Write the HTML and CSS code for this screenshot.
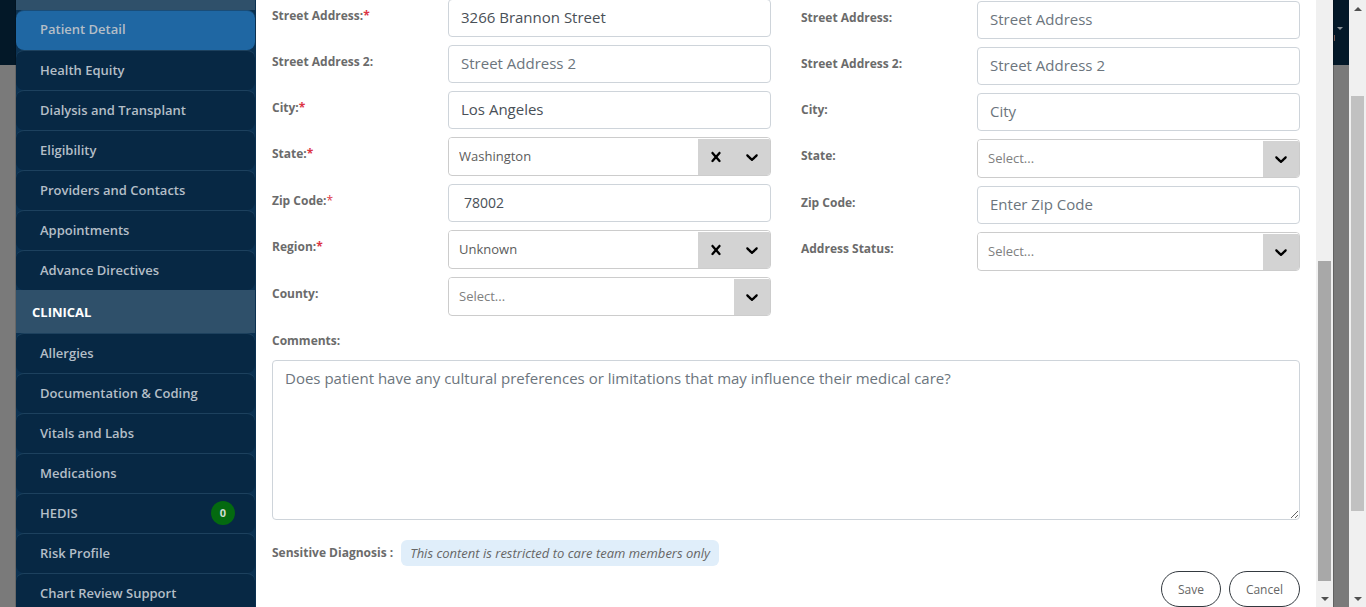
FILE: index.html
```html
<!DOCTYPE html>
<html lang="en">
<head>
<meta charset="utf-8">
<meta name="viewport" content="width=device-width, initial-scale=1">
<title>Patient Detail</title>
<link rel="stylesheet" href="styles.css">
</head>
<body>
<svg class="sprite" aria-hidden="true">
  <symbol id="chevron" viewBox="0 0 20 20"><path d="M4.516 7.548c0.436-0.446 1.043-0.481 1.576 0l3.908 3.747 3.908-3.747c0.533-0.481 1.141-0.446 1.574 0 0.436 0.445 0.408 1.197 0 1.615-0.406 0.418-4.695 4.502-4.695 4.502-0.217 0.223-0.502 0.335-0.787 0.335s-0.57-0.112-0.789-0.335c0 0-4.287-4.084-4.695-4.502s-0.436-1.17 0-1.615z"/></symbol>
  <symbol id="cross" viewBox="0 0 20 20"><path d="M14.348 14.849c-0.469 0.469-1.229 0.469-1.697 0l-2.651-3.030-2.651 3.029c-0.469 0.469-1.229 0.469-1.697 0-0.469-0.469-0.469-1.229 0-1.697l2.758-3.15-2.759-3.152c-0.469-0.469-0.469-1.228 0-1.697s1.228-0.469 1.697 0l2.652 3.031 2.651-3.031c0.469-0.469 1.228-0.469 1.697 0s0.469 1.229 0 1.697l-2.758 3.152 2.758 3.15c0.469 0.469 0.469 1.229 0 1.698z"/></symbol>
</svg>
<div class="page">
  <div class="backdrop backdrop-left"></div>
  <div class="modal">
    <nav class="sidebar">
      <div class="section section-cut"></div>
      <a class="item active" href="#">Patient Detail</a>
      <a class="item" href="#">Health Equity</a>
      <a class="item" href="#">Dialysis and Transplant</a>
      <a class="item" href="#">Eligibility</a>
      <a class="item" href="#">Providers and Contacts</a>
      <a class="item" href="#">Appointments</a>
      <a class="item" href="#">Advance Directives</a>
      <div class="section">CLINICAL</div>
      <a class="item" href="#">Allergies</a>
      <a class="item" href="#">Documentation &amp; Coding</a>
      <a class="item" href="#">Vitals and Labs</a>
      <a class="item" href="#">Medications</a>
      <a class="item" href="#">HEDIS <span class="count">0</span></a>
      <a class="item" href="#">Risk Profile</a>
      <a class="item" href="#">Chart Review Support</a>
    </nav>
    <form class="form">
      <div class="columns">
        <div class="column">
          <div class="field"><label for="street">Street Address:<span class="req">*</span></label><input class="input" id="street" type="text" value="3266 Brannon Street"></div>
          <div class="field"><label for="street2">Street Address 2:</label><input class="input" id="street2" type="text" placeholder="Street Address 2"></div>
          <div class="field"><label for="city">City:<span class="req">*</span></label><input class="input" id="city" type="text" value="Los Angeles"></div>
          <div class="field"><label for="state">State:<span class="req">*</span></label>
            <div class="picker"><select id="state"><option>Washington</option></select><div class="tools"><button class="tool clear" type="button" aria-label="Clear state"><svg class="icon"><use href="#cross"/></svg></button><span class="tool"><svg class="icon"><use href="#chevron"/></svg></span></div></div></div>
          <div class="field"><label for="zip">Zip Code:<span class="req light">*</span></label><input class="input zip" id="zip" type="text" value="78002"></div>
          <div class="field"><label for="region">Region:<span class="req">*</span></label>
            <div class="picker"><select id="region"><option>Unknown</option></select><div class="tools"><button class="tool clear" type="button" aria-label="Clear region"><svg class="icon"><use href="#cross"/></svg></button><span class="tool"><svg class="icon"><use href="#chevron"/></svg></span></div></div></div>
          <div class="field"><label for="county">County:</label>
            <div class="picker empty"><select id="county"><option>Select...</option></select><div class="tools"><span class="tool"><svg class="icon"><use href="#chevron"/></svg></span></div></div></div>
        </div>
        <div class="column column-second">
          <div class="field"><label for="alt-street">Street Address:</label><input class="input" id="alt-street" type="text" placeholder="Street Address"></div>
          <div class="field"><label for="alt-street2">Street Address 2:</label><input class="input" id="alt-street2" type="text" placeholder="Street Address 2"></div>
          <div class="field"><label for="alt-city">City:</label><input class="input" id="alt-city" type="text" placeholder="City"></div>
          <div class="field"><label for="alt-state">State:</label>
            <div class="picker empty"><select id="alt-state"><option>Select...</option></select><div class="tools"><span class="tool"><svg class="icon"><use href="#chevron"/></svg></span></div></div></div>
          <div class="field"><label for="alt-zip">Zip Code:</label><input class="input" id="alt-zip" type="text" placeholder="Enter Zip Code"></div>
          <div class="field"><label for="alt-status">Address Status:</label>
            <div class="picker empty"><select id="alt-status"><option>Select...</option></select><div class="tools"><span class="tool"><svg class="icon"><use href="#chevron"/></svg></span></div></div></div>
        </div>
      </div>
      <label class="comments-label" for="comments">Comments:</label>
      <textarea class="input comments" id="comments" placeholder="Does patient have any cultural preferences or limitations that may influence their medical care?"></textarea>
      <div class="sensitive"><span class="sensitive-label">Sensitive Diagnosis :</span><em class="note">This content is restricted to care team members only</em></div>
      <div class="actions"><button class="button" type="submit">Save</button><button class="button" type="button">Cancel</button></div>
    </form>
    <div class="scrollbar scrollbar-inner"><div class="lead"></div><div class="thumb"></div><div class="tail"></div><div class="arrow down"></div></div>
  </div>
  <div class="backdrop backdrop-right"><span class="caret"></span><span class="avatar-edge"></span></div>
  <div class="scrollbar scrollbar-page"><div class="arrow up"></div><div class="lead"></div><div class="thumb"></div><div class="tail"></div><div class="arrow down"></div></div>
</div>
</body>
</html>
```
FILE: styles.css
```css
* { box-sizing: border-box; }
body { margin: 0; font-family: "Open Sans", "Noto Sans", sans-serif; color: #666; background: #7a7a7a; }
.sprite { display: none; }
.page { display: flex; height: 100vh; overflow: hidden; }
.backdrop { flex: none; width: 16px; background: linear-gradient(#031828 65px, #7a7a7a 65px); }
.backdrop-left { border-right: 1px solid rgba(0, 0, 0, .15); }
.backdrop-right { border-left: 1px solid rgba(0, 0, 0, .2); padding-top: 27px; }
.caret { display: block; width: 6px; margin-left: 3px; border: 3px solid transparent; border-top-color: #8d9399; border-bottom: 0; }
.avatar-edge { display: block; width: 1px; height: 6px; margin-top: 5px; background: #7a5a52; }
.modal { flex: 1; display: flex; min-width: 0; background: #fff; }

.sidebar { flex: none; width: 240px; overflow: hidden; background: #0b3151; border-right: 1px solid #0b3151; }
.section { height: 43px; padding-left: 16px; background: #2f506a; color: #fff; font-size: 13px; font-weight: 700; line-height: 44px; }
.section-cut { height: 10px; }
.item { display: flex; align-items: center; justify-content: space-between; height: 40px; padding: 0 20px 2px 24px; border-top: 1px solid #1d415e; border-radius: 8px; background: #072844; color: #b4bec7; font-size: 13px; font-weight: 600; text-decoration: none; }
.item.active { padding-bottom: 3px; background: #1f67a3; border-top-color: #1a4d78; }
.count { width: 24px; height: 24px; border-radius: 50%; background: #046a10; color: #cddccf; font-size: 11px; font-weight: 700; line-height: 24px; text-align: center; }

.form { flex: 1; min-width: 0; margin-top: -1px; padding: 0 16px; }
.columns { display: grid; grid-template-columns: 1fr 1fr; column-gap: 30px; }
.column { display: flex; flex-direction: column; gap: 8px; }
.column-second { padding-top: 2px; }
.field { display: grid; grid-template-columns: 176px 1fr; }
label, .sensitive-label { color: #6b6b6b; font-size: 12px; font-weight: 700; line-height: 18px; }
.field label { padding-top: 8px; }
.req { color: #dc3545; }
.light { font-weight: 400; }
.input { width: 100%; min-width: 0; height: 38px; padding: 5px 12px 7px; border: 1px solid #ced4da; border-radius: 4px; background: #fff; color: #495057; font-family: inherit; font-size: 15px; line-height: 24px; }
.input::placeholder { color: #6c757d; opacity: 1; }
.zip { padding-left: 15px; font-size: 14px; }
.picker { position: relative; height: 39px; border: 1px solid #ccc; border-radius: 4px; overflow: hidden; }
.picker select { appearance: none; display: block; width: 100%; height: 35px; padding: 0 80px 0 10px; border: 0; background: #fff; color: #5c5c5c; font-family: inherit; font-size: 13px; }
.picker.empty select { color: #808080; }
.tools { position: absolute; top: 1px; right: 0; bottom: 0; display: flex; background: #d3d3d3; pointer-events: none; }
.tool { display: flex; align-items: center; justify-content: center; width: 36px; padding: 0; border: 0; background: none; }
.clear { pointer-events: auto; }
.icon { width: 20px; height: 20px; fill: #000; }
.comments-label { display: block; margin: 16px 0 10px; }
.comments { display: block; height: 160px; resize: vertical; }
.sensitive { display: flex; align-items: center; gap: 8px; margin-top: 20px; }
.note { padding: 4px 9px; border-radius: 6px; background: #e0eefa; font-size: 13px; line-height: 18px; }
.actions { display: flex; justify-content: flex-end; gap: 8px; margin-top: 5px; }
.button { height: 36px; padding: 0 16px; border: 1px solid #343a40; border-radius: 18px; background: #fff; color: #666; font-family: inherit; font-size: 12px; }

.scrollbar { display: flex; flex: none; flex-direction: column; width: 17px; padding: 0 2px; background: #f0f0f0; }
.arrow { display: flex; align-items: center; justify-content: center; flex: none; height: 17px; }
.arrow::after { content: ""; border: 4px solid transparent; }
.down::after { border-top-color: #505050; border-bottom: 0; }
.up::after { border-bottom-color: #505050; border-top: 0; }
.scrollbar-inner .lead { flex: 261; }
.scrollbar-inner .thumb { flex: 320; background: #a8a8a8; }
.scrollbar-inner .tail { flex: 9; }
.scrollbar-page .lead { flex: 79; }
.scrollbar-page .thumb { flex: 415; background: #c1c1c1; }
.scrollbar-page .tail { flex: 79; }
```
